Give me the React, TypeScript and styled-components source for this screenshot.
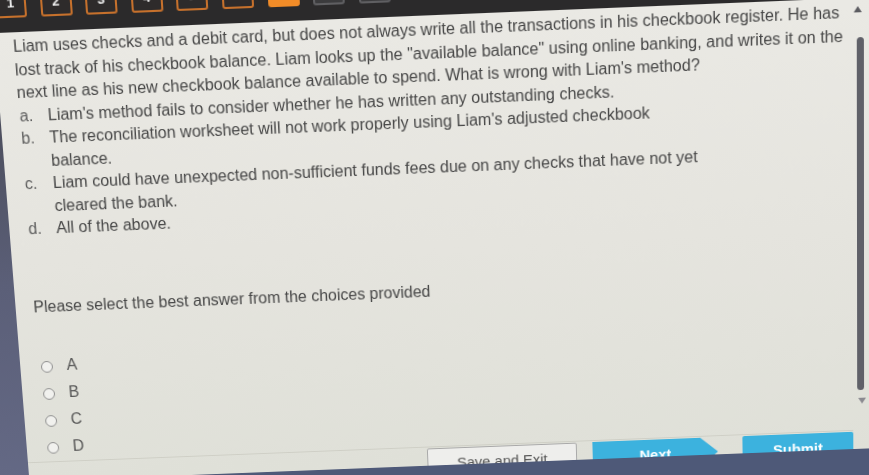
import { FunctionComponent } from "react";
import styled, { createGlobalStyle, css } from "styled-components";

const GlobalStyle = createGlobalStyle`
  html, body {
    margin: 0;
    padding: 0;
    background: #2c2b2d;
    overflow: hidden;
  }
  #root {
    width: 869px;
    height: 475px;
  }
`;

const Viewport = styled.div`
  width: 869px;
  height: 475px;
  overflow: hidden;
  background: #2c2b2d;
  font-family: "Liberation Sans", Arial, sans-serif;
`;

// the screen was photographed at an angle: tilt the whole page the same way
const Stage = styled.div`
  width: 949px;
  height: 535px;
  margin: -30px -40px;
  display: flex;
  flex-direction: column;
  transform-origin: 50% 50%;
  transform: perspective(1000px) rotateX(-5.3deg) skewX(2.3deg) skewY(-2.3deg);
  filter: blur(0.35px);
`;

const TopBar = styled.div`
  height: 49px;
  flex: none;
  box-sizing: border-box;
  background: #2b2a2b;
  display: flex;
  align-items: flex-end;
  gap: 13.6px;
  padding: 0 0 14px 53px;
`;

type TabState = "done" | "current" | "upcoming";

const QuestionTab = styled.div<{ $state: TabState }>`
  width: 31px;
  height: 30px;
  box-sizing: border-box;
  border-radius: 3px;
  display: flex;
  align-items: center;
  justify-content: center;
  font-size: 13px;
  font-weight: 700;
  color: #f3f3f3;
  border: 2px solid #c7712c;
  background: #2e2b2b;
  ${({ $state }) =>
    $state === "current" &&
    css`
      background: #f28c28;
      border-color: #f28c28;
    `}
  ${({ $state }) =>
    $state === "upcoming" &&
    css`
      background: #3b3b3d;
      border-color: #5f5f62;
      color: #9a9a9a;
    `}
`;

const Panel = styled.div`
  flex: 1;
  min-height: 0;
  display: flex;
  background: linear-gradient(180deg, #eae9e4 0%, #e5e4de 50%, #dfe0d8 100%);
`;

const Bezel = styled.div`
  width: 50px;
  flex: none;
  background: linear-gradient(180deg, #45464f 0%, #5b5f78 55%, #646985 100%);
`;

const Main = styled.main`
  width: 843px;
  flex: none;
  display: flex;
  flex-direction: column;
  color: #474747;
  font-size: 16px;
  line-height: 22.5px;
`;

const Body = styled.div`
  flex: 1;
  padding: 3px 0 0 18px;
`;

const Question = styled.p`
  margin: 0;
  white-space: nowrap;
`;

const Choices = styled.ol`
  list-style: none;
  margin: 0;
  padding: 0 0 0 1px;
`;

const Choice = styled.li`
  display: grid;
  grid-template-columns: 28px auto;
  white-space: nowrap;
`;

const ChoiceLetter = styled.span`
  color: #5e5e5e;
`;

const Prompt = styled.p`
  margin: 56px 0 0;
  white-space: nowrap;
`;

const Answers = styled.div`
  margin-top: 35.6px;
  display: flex;
  flex-direction: column;
`;

const Answer = styled.label`
  height: 28px;
  display: flex;
  align-items: center;
  gap: 14px;
  padding-left: 3px;
  color: #555;
`;

const Radio = styled.span`
  width: 12px;
  height: 12px;
  box-sizing: border-box;
  border-radius: 50%;
  border: 1.5px solid #8e8e8e;
  background: #f1f1ee;
`;

const Footer = styled.div`
  height: 20px;
  flex: none;
  box-sizing: border-box;
  border-top: 1px solid #cfcfc6;
  overflow: hidden;
  display: flex;
  justify-content: flex-end;
  align-items: flex-start;
  padding-top: 1px;
`;

type ButtonKind = "plain" | "next" | "submit";

const FooterButton = styled.button<{ $kind: ButtonKind; $width: number; $gap?: number }>`
  width: ${({ $width }) => $width}px;
  height: 30px;
  flex: none;
  margin-right: ${({ $gap }) => $gap ?? 0}px;
  font-family: inherit;
  font-size: 15px;
  border-radius: 2px;
  border: 1px solid #a9a9a9;
  background: #eeeeec;
  color: #555;
  ${({ $kind }) =>
    $kind !== "plain" &&
    css`
      border: none;
      background: #3cb2de;
      color: #fff;
      font-weight: 700;
    `}
  ${({ $kind }) =>
    $kind === "next" &&
    css`
      border-radius: 0;
      clip-path: polygon(0 0, calc(100% - 18px) 0, 100% 50%, calc(100% - 18px) 100%, 0 100%);
    `}
`;

const ScrollTrack = styled.div`
  flex: 1;
  display: flex;
  flex-direction: column;
  align-items: flex-start;
  padding: 8px 0 0 1px;
`;

const Arrow = styled.span<{ $dir: "up" | "down" }>`
  width: 0;
  height: 0;
  border-left: 4.5px solid transparent;
  border-right: 4.5px solid transparent;
  ${({ $dir }) =>
    $dir === "up"
      ? css`
          border-bottom: 6px solid #5b5b60;
        `
      : css`
          margin: 8px 0 0 4px;
          border-top: 6px solid #8a8a90;
        `}
`;

const Thumb = styled.div`
  width: 7px;
  height: 353px;
  margin: 24px 0 0 3px;
  border-radius: 4px;
  background: #5f6068;
`;

const BottomBar = styled.div`
  height: 34px;
  flex: none;
  background: #4e5978;
`;

const tabs: TabState[] = ["done", "done", "done", "done", "done", "done", "current", "upcoming", "upcoming"];

const questionLines = [
  "Liam uses checks and a debit card, but does not always write all the transactions in his checkbook register. He has",
  'lost track of his checkbook balance. Liam looks up the "available balance" using online banking, and writes it on the',
  "next line as his new checkbook balance available to spend. What is wrong with Liam's method?",
];

const choices = [
  { letter: "a.", lines: ["Liam's method fails to consider whether he has written any outstanding checks."] },
  {
    letter: "b.",
    lines: ["The reconciliation worksheet will not work properly using Liam's adjusted checkbook", "balance."],
  },
  {
    letter: "c.",
    lines: [
      "Liam could have unexpected non-sufficient funds fees due on any checks that have not yet",
      "cleared the bank.",
    ],
  },
  { letter: "d.", lines: ["All of the above."] },
];

const answers = ["A", "B", "C", "D"];

const App: FunctionComponent = () => {
  return (
    <Viewport>
      <GlobalStyle />
      <Stage>
        <TopBar>
          {tabs.map((state, i) => (
            <QuestionTab key={i} $state={state}>
              {i + 1}
            </QuestionTab>
          ))}
        </TopBar>

        <Panel>
          <Bezel />
          <Main>
            <Body>
              <Question>
                {questionLines.map((line, i) => (
                  <span key={i}>
                    {line}
                    <br />
                  </span>
                ))}
              </Question>
              <Choices>
                {choices.map((c) => (
                  <Choice key={c.letter}>
                    <ChoiceLetter>{c.letter}</ChoiceLetter>
                    <span>
                      {c.lines.map((line, i) => (
                        <span key={i}>
                          {line}
                          <br />
                        </span>
                      ))}
                    </span>
                  </Choice>
                ))}
              </Choices>
              <Prompt>Please select the best answer from the choices provided</Prompt>
              <Answers>
                {answers.map((a) => (
                  <Answer key={a}>
                    <Radio />
                    {a}
                  </Answer>
                ))}
              </Answers>
            </Body>
            <Footer>
              <FooterButton $kind="plain" $width={153} $gap={16}>
                Save and Exit
              </FooterButton>
              <FooterButton $kind="next" $width={128} $gap={25}>
                Next
              </FooterButton>
              <FooterButton $kind="submit" $width={113}>
                Submit
              </FooterButton>
            </Footer>
          </Main>
          <ScrollTrack>
            <Arrow $dir="up" />
            <Thumb />
            <Arrow $dir="down" />
          </ScrollTrack>
        </Panel>

        <BottomBar />
      </Stage>
    </Viewport>
  );
};

export default App;
